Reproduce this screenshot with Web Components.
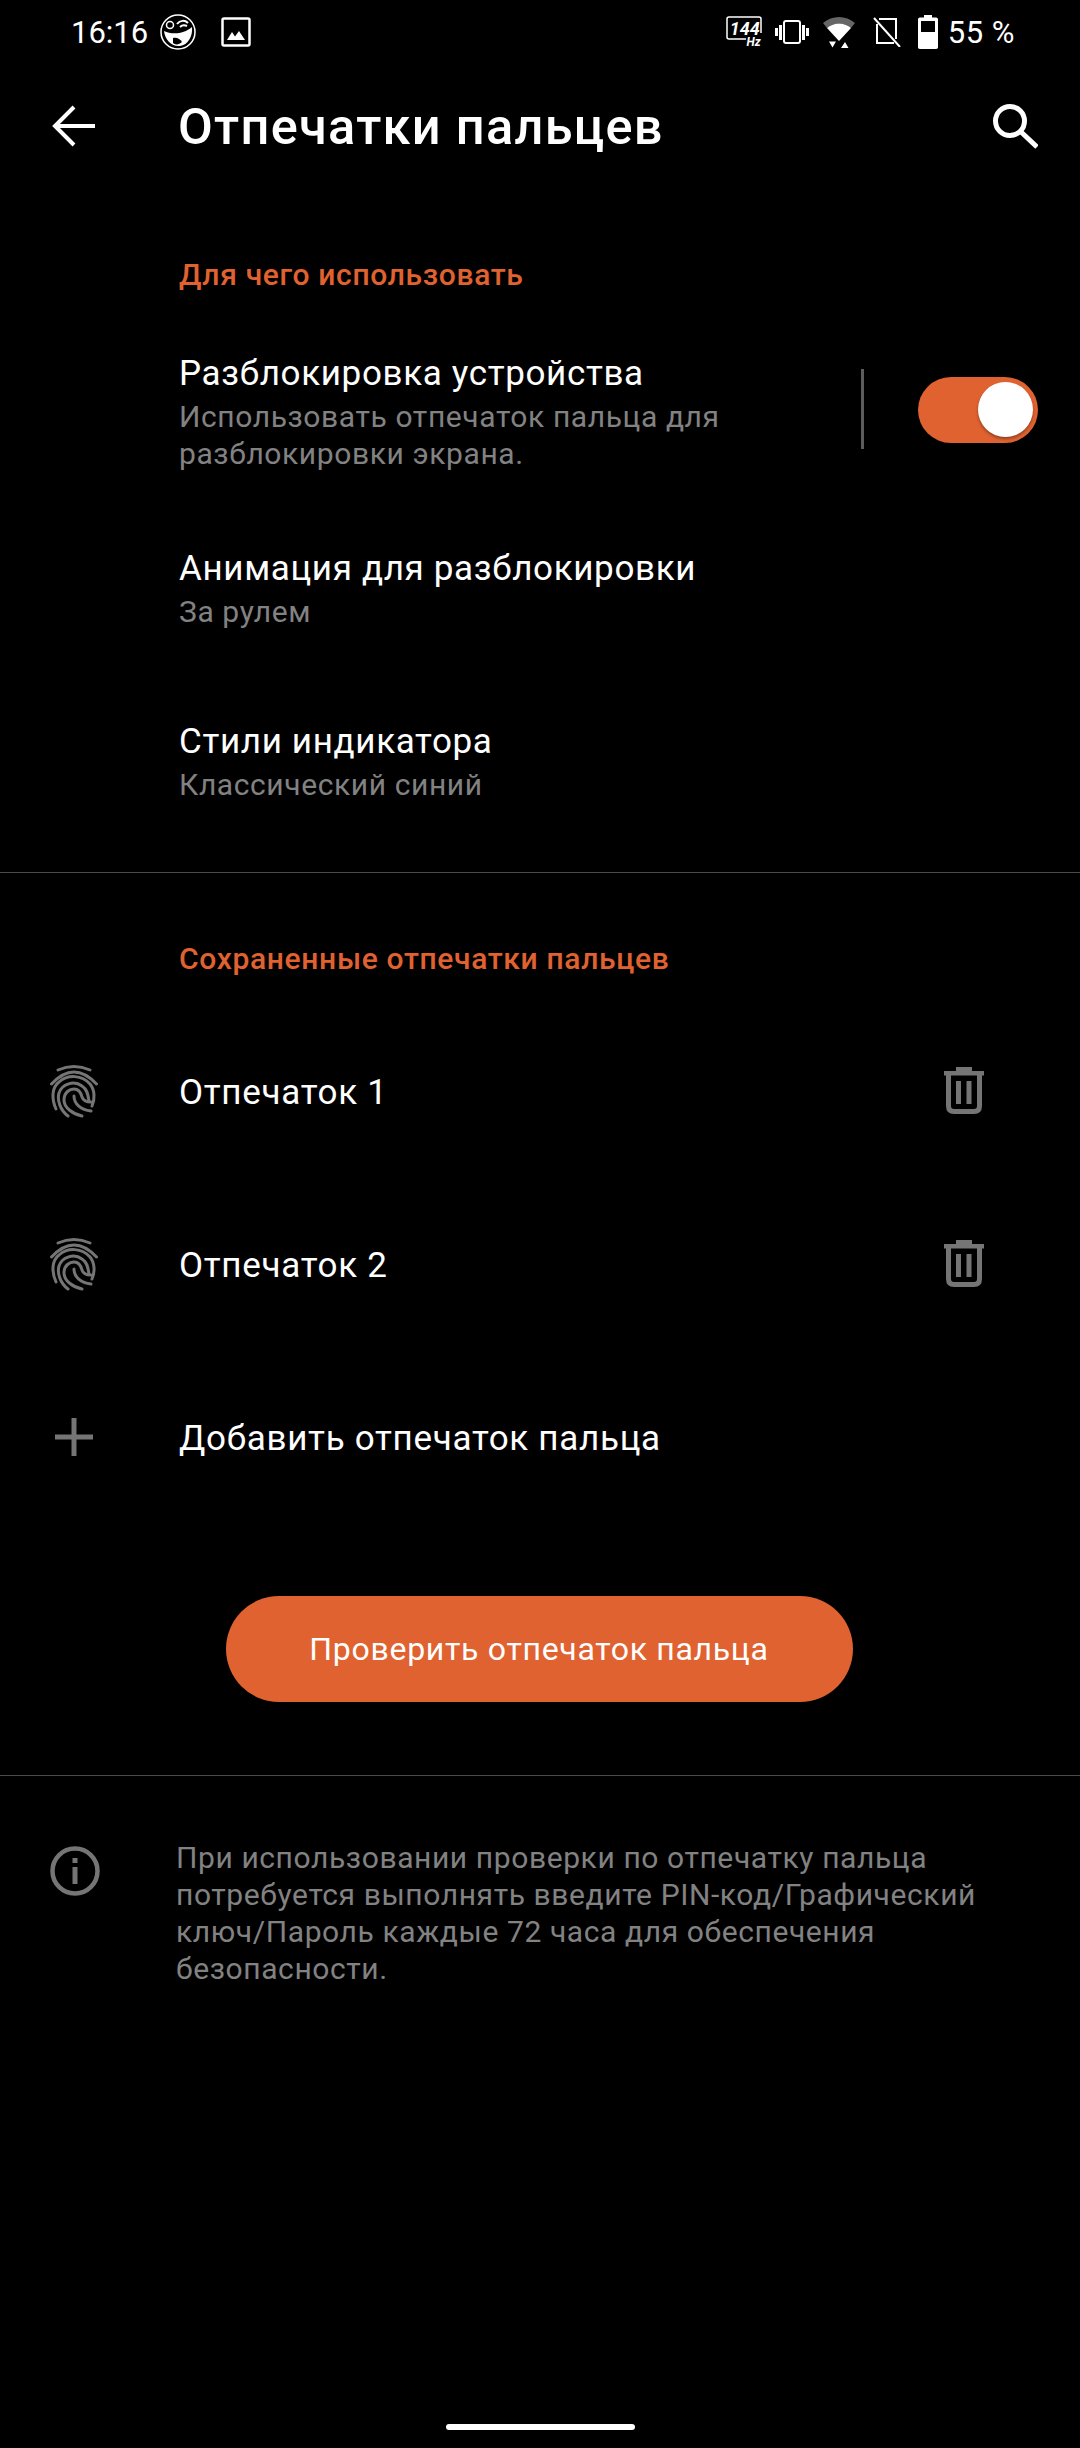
<!DOCTYPE html>
<html lang="ru">
<head>
<meta charset="utf-8">
<title>Отпечатки пальцев</title>
<style>
  html, body { margin: 0; background: #000; }
  body { width: 1080px; height: 2448px; overflow: hidden; font-family: Roboto, "Noto Sans", sans-serif; color: #fff; display: flex; flex-direction: column; }
</style>
</head>
<body>
<status-bar></status-bar>
<app-bar heading="Отпечатки пальцев"></app-bar>

<section-label style="margin-top:68px">Для чего использовать</section-label>
<pref-row style="height:195px;margin-top:23px" heading="Разблокировка устройства" toggle>Использовать отпечаток пальца для<br>разблокировки экрана.</pref-row>
<pref-row style="height:173px" heading="Анимация для разблокировки">За рулем</pref-row>
<pref-row style="height:173px" heading="Стили индикатора">Классический синий</pref-row>
<hr-line style="margin-top:14px"></hr-line>

<section-label style="margin-top:67px">Сохраненные отпечатки пальцев</section-label>
<print-row style="margin-top:28px" icon="print" trash>Отпечаток 1</print-row>
<print-row icon="print" trash>Отпечаток 2</print-row>
<print-row icon="plus">Добавить отпечаток пальца</print-row>

<action-button>Проверить отпечаток пальца</action-button>
<hr-line style="margin-top:73px"></hr-line>
<info-note>При использовании проверки по отпечатку пальца<br>потребуется выполнять введите PIN-код/Графический<br>ключ/Пароль каждые 72 часа для обеспечения<br>безопасности.</info-note>
<home-bar></home-bar>

<script>
const ICONS = {
  print: `<svg width="48" height="54" viewBox="0 0 48 54" fill="none" stroke="#757575" stroke-width="3" stroke-linecap="round">
    <path d="M8 6Q24 -1 40 6"/>
    <path d="M1.500 20Q24 -4 46.500 20"/>
    <path d="M6 45C2 36 1 24 9 18C18 10 32 11 40 20C45 26 45 35 42 42"/>
    <path d="M18 52C10 46 7 36 9 29C12 20 24 16 32 22C38 26 38 32 39 37"/>
    <path d="M32 52C23 50 14 44 14 36C14 28 20 25 24 25C29 25 31 29 32 33C33 36 36 38 41 38"/>
    <path d="M24 32C24 40 31 46 41 47"/>
  </svg>`,
  plus: `<svg width="38" height="38" viewBox="0 0 38 38" fill="#757575"><rect x="16.500" y="0" width="5" height="38"/><rect x="0" y="16.500" width="38" height="5"/></svg>`,
  trash: `<svg width="42" height="47" viewBox="0 0 42 47" fill="none"><path fill="#757575" d="M13 0H29V4H41V8.500H1V4H13Z"/><path stroke="#757575" stroke-width="5" d="M5.500 8V39C5.500 43 7.500 44.500 11 44.500H31C34.500 44.500 36.500 43 36.500 39V8"/><rect x="13" y="14" width="5" height="23" fill="#757575"/><rect x="23.500" y="14" width="5" height="23" fill="#757575"/></svg>`
}

class StatusBar extends HTMLElement {
  constructor() {
    super()
    this.attachShadow({mode: "open"})
    this.shadowRoot.innerHTML = `
      <style>
        :host { display: flex; align-items: center; height: 64px; padding: 0 65px 0 71px; font-size: 31px; color: #fff; box-sizing: border-box; }
        .left, .right { display: flex; align-items: center; }
        .right { margin-left: auto; }
        svg { display: block; }
        .hz { position: relative; width: 36px; height: 32px; }
        .hz b { position: absolute; font-style: italic; font-weight: 700; line-height: 1; white-space: nowrap; }
        .n { left: 4px; top: 4px; font-size: 18px; }
        .u { right: 1px; top: 20px; font-size: 12px; }
      </style>
      <div class="left">
        <span>16:16</span>
        <svg style="margin-left:12px" width="36" height="36" viewBox="0 0 36 36" fill="none">
          <circle cx="18" cy="18" r="17" stroke="#fff" stroke-width="1.500"/>
          <path fill="#fff" d="M4 17C12 21 24 20 32 13C33 22 28 31 20 32C12 33 5 26 4 17Z"/>
          <path fill="#000" d="M13 24C17 23 20 25 22 28C19 31 15 31 13 29Z"/>
          <circle cx="10" cy="11" r="3.500" stroke="#fff" stroke-width="1.500"/>
          <path stroke="#fff" stroke-width="2" d="M17 10C20 6 25 6 28 9M20 13C22 11 25 11 27 12"/>
        </svg>
        <svg style="margin-left:25px" width="30" height="30" viewBox="0 0 30 30" fill="none">
          <rect x="1.500" y="1.500" width="27" height="27" rx="1.500" stroke="#fff" stroke-width="2.500"/>
          <path fill="#fff" d="M6 23L11 15L14 19.500L18 14L24 23Z"/>
        </svg>
      </div>
      <div class="right">
        <div class="hz">
          <svg width="36" height="32" viewBox="0 0 36 32" fill="none">
            <path stroke="#fff" stroke-width="1.500" d="M20 23H3C1.500 23 1 22 1 21V3C1 2 1.500 1 3 1H33C34.500 1 35 2 35 3V17"/>
          </svg>
          <b class="n">144</b><b class="u">Hz</b>
        </div>
        <svg style="margin-left:13px" width="34" height="24" viewBox="0 0 34 24" fill="none">
          <rect x="9" y="1" width="16" height="22" rx="2" stroke="#fff" stroke-width="2"/>
          <path stroke="#fff" stroke-width="3" d="M5.500 5V20M1.500 8V16M28.500 5V20M32.500 8V16"/>
        </svg>
        <svg style="margin-left:14px" width="32" height="33" viewBox="0 0 32 33">
          <path fill="#666" d="M0 7C9 -1 23 -1 32 7L28 12C21 6 11 6 4 12Z"/>
          <path fill="#fff" d="M4 12C11 6 21 6 28 12L16 25Z"/>
          <path fill="#fff" d="M6 25.500H13L9.500 31.500ZM18 32L22 26L25.500 32Z"/>
        </svg>
        <svg style="margin-left:18px" width="28" height="30" viewBox="0 0 28 30" fill="none">
          <path stroke="#fff" stroke-width="2" d="M6 2H23V22M21 26H4V7"/>
          <path stroke="#fff" stroke-width="2" d="M1 1L27 30"/>
        </svg>
        <svg style="margin-left:17px" width="20" height="34" viewBox="0 0 20 34">
          <path fill="#fff" d="M6 0H14V2.500H18C19.500 2.500 20 3.500 20 4.500V32C20 33 19.500 34 18 34H2C.5 34 0 33 0 32V4.500C0 3.500 .5 2.500 2 2.500H6Z"/>
          <rect x="3" y="6" width="14" height="11" fill="#000"/>
        </svg>
        <span style="margin-left:10px;letter-spacing:.5px">55 %</span>
      </div>`
  }
}

class AppBar extends HTMLElement {
  constructor() {
    super()
    this.attachShadow({mode: "open"})
    this.shadowRoot.innerHTML = `
      <style>
        :host { display: flex; align-items: center; height: 124px; padding-left: 52px; padding-right: 42px; }
        h1 { margin: 0 0 0 83px; font-size: 50.500px; letter-spacing: 1.300px; font-weight: 500; color: #fff; }
        svg { display: block; }
        .search { margin-left: auto; }
      </style>
      <svg width="43" height="42" viewBox="0 0 43 42" fill="none" stroke="#fff" stroke-width="4"><path d="M43 21H3M22 2L3 21L22 40"/></svg>
      <h1></h1>
      <svg class="search" width="46" height="46" viewBox="0 0 46 46" fill="none" stroke="#fff" stroke-width="5"><circle cx="18" cy="18" r="14.500"/><path d="M28 28L45 44"/></svg>`
    this.shadowRoot.querySelector("h1").textContent = this.getAttribute("heading")
  }
}

class SectionLabel extends HTMLElement {
  constructor() {
    super()
    this.attachShadow({mode: "open"})
    this.shadowRoot.innerHTML = `
      <style>
        :host { display: block; padding-left: 179px; font-size: 30px; letter-spacing: .67px; line-height: 38px; font-weight: 500; color: #e06230; }
      </style>
      <slot></slot>`
  }
}

class PrefRow extends HTMLElement {
  constructor() {
    super()
    this.attachShadow({mode: "open"})
    this.shadowRoot.innerHTML = `
      <style>
        :host { display: flex; align-items: flex-start; padding: 0 42px 0 179px; box-sizing: border-box; }
        .text { flex: 1; padding-top: 35px; }
        .title { font-size: 35px; letter-spacing: .65px; line-height: 44px; color: #fff; }
        .sub { font-size: 30px; letter-spacing: .6px; line-height: 37px; color: #828282; margin-top: 2px; }
        .sep { width: 3px; height: 80px; background: #5c5c5c; margin: 52px 54px 0 0; }
        .switch { position: relative; width: 120px; height: 66px; margin-top: 60px; background: #e06230; border-radius: 33px; }
        .knob { position: absolute; top: 5px; right: 5px; width: 55px; height: 55px; border-radius: 50%; background: #fff; box-shadow: 0 2px 3px rgba(0,0,0,.35); }
      </style>
      <div class="text"><div class="title"></div><div class="sub"><slot></slot></div></div>`
    this.shadowRoot.querySelector(".title").textContent = this.getAttribute("heading")
    if (this.hasAttribute("toggle")) {
      const t = document.createElement("template")
      t.innerHTML = `<div class="sep"></div><div class="switch"><div class="knob"></div></div>`
      this.shadowRoot.appendChild(t.content)
    }
  }
}

class HrLine extends HTMLElement {
  constructor() {
    super()
    this.attachShadow({mode: "open"})
    this.shadowRoot.innerHTML = `<style>:host { display: block; height: 1px; background: #4a4a4a; }</style>`
  }
}

class PrintRow extends HTMLElement {
  constructor() {
    super()
    this.attachShadow({mode: "open"})
    const trash = this.hasAttribute("trash") ? `<div class="trash">${ICONS.trash}</div>` : ""
    this.shadowRoot.innerHTML = `
      <style>
        :host { display: flex; align-items: center; height: 173px; font-size: 35px; letter-spacing: .7px; color: #fff; }
        .icon { width: 147px; margin: 0 32px 4px 0; flex: none; display: flex; justify-content: center; }
        .trash { margin: 0 95px 4px auto; display: flex; }
        svg { display: block; }
      </style>
      <div class="icon">${ICONS[this.getAttribute("icon")]}</div>
      <slot></slot>
      ${trash}`
  }
}

class ActionButton extends HTMLElement {
  constructor() {
    super()
    this.attachShadow({mode: "open"})
    this.shadowRoot.innerHTML = `
      <style>
        :host { display: flex; justify-content: center; margin-top: 71px; padding-right: 2px; }
        button { width: 627px; height: 106px; border: 0; border-radius: 53px; background: #e06230; color: #fff; font: 400 32px Roboto, sans-serif; letter-spacing: .7px; padding: 0; }
      </style>
      <button><slot></slot></button>`
  }
}

class InfoNote extends HTMLElement {
  constructor() {
    super()
    this.attachShadow({mode: "open"})
    this.shadowRoot.innerHTML = `
      <style>
        :host { display: flex; padding: 62px 40px 0 50px; font-size: 30px; letter-spacing: .6px; line-height: 37px; color: #828282; }
        svg { display: block; flex: none; margin: 8px -50px 0 0; }
        .body { margin-left: 126px; margin-top: 1px; }
      </style>
      <svg width="50" height="50" viewBox="0 0 50 50" fill="none"><circle cx="25" cy="25" r="22.500" stroke="#757575" stroke-width="4.500"/><rect x="22.500" y="21" width="5" height="17" fill="#757575"/><rect x="22.500" y="12" width="5" height="5" fill="#757575"/></svg>
      <div class="body"><slot></slot></div>`
  }
}

class HomeBar extends HTMLElement {
  constructor() {
    super()
    this.attachShadow({mode: "open"})
    this.shadowRoot.innerHTML = `
      <style>
        :host { display: flex; justify-content: center; margin-top: auto; padding-bottom: 18px; }
        div { width: 189px; height: 6px; border-radius: 3px; background: #fff; }
      </style>
      <div></div>`
  }
}

customElements.define("status-bar", StatusBar)
customElements.define("app-bar", AppBar)
customElements.define("section-label", SectionLabel)
customElements.define("pref-row", PrefRow)
customElements.define("hr-line", HrLine)
customElements.define("print-row", PrintRow)
customElements.define("action-button", ActionButton)
customElements.define("info-note", InfoNote)
customElements.define("home-bar", HomeBar)
</script>
</body>
</html>
